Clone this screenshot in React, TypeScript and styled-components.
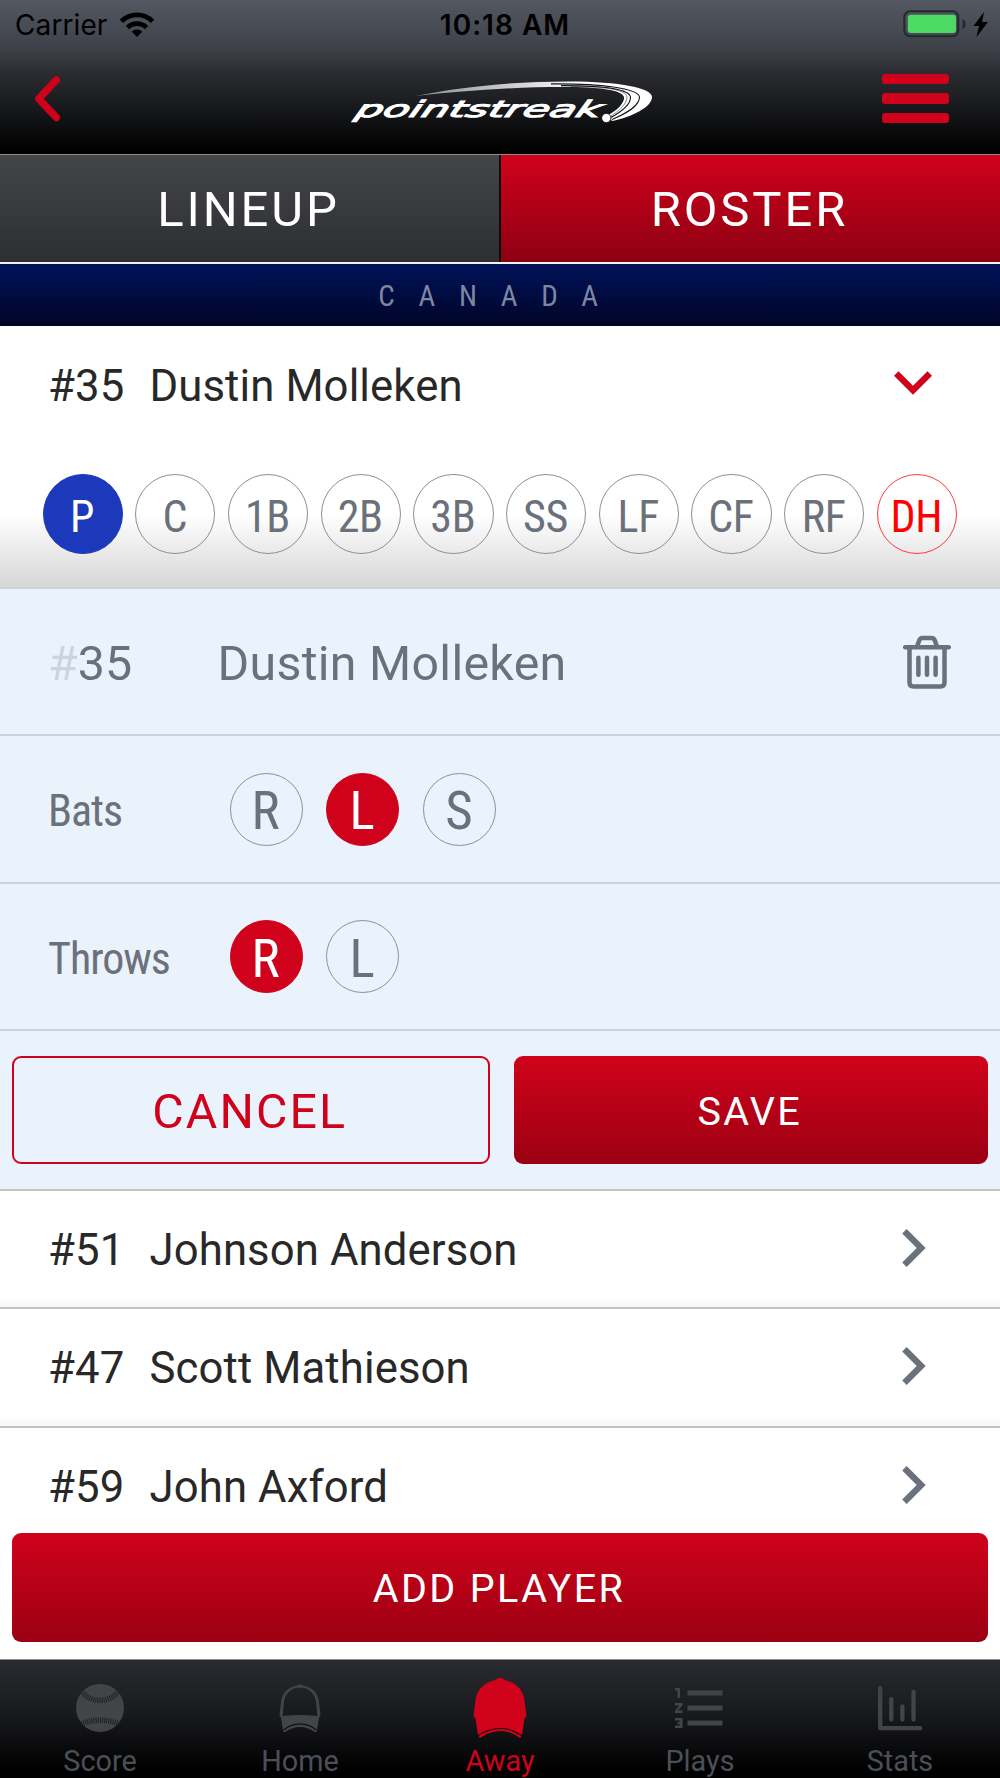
import React from "react";
import styled, { createGlobalStyle, css } from "styled-components";
import { MdChevronRight, MdExpandMore, MdFormatListNumbered } from "react-icons/md";

const RED = "#d0021b";
const SLATE = "#6b717b";
const RULE = "#ccd4de";

const GlobalStyle = createGlobalStyle`
  * { box-sizing: border-box; }
  body { margin: 0; background: #fff; }
  button { font: inherit; border: 0; background: none; padding: 0; }
`;

const Screen = styled.div`
  display: flex;
  flex-direction: column;
  width: 1000px;
  height: 1778px;
  overflow: hidden;
  background: #fff;
  font-family: Roboto, "Liberation Sans", sans-serif;
  color: #282829;
`;

const Header = styled.header`
  flex: none;
  height: 154px;
  background: linear-gradient(#535861 0, #3e4149 48px, #2a2c30 74px, #191a1d 106px, #000 150px);
`;

const StatusBar = styled.div`
  display: grid;
  grid-template-columns: 1fr auto 1fr;
  align-items: center;
  height: 50px;
  padding: 0 12px 0 15px;
  font: 400 28px/50px Inter, "Liberation Sans", sans-serif;
  color: #000;
`;

const Carrier = styled.div`
  display: flex;
  align-items: center;
  gap: 12px;
`;

const CarrierName = styled.span`
  letter-spacing: 0.1px;
`;

const Clock = styled.div`
  font-weight: 600;
  letter-spacing: 1px;
  padding: 0 0 0 7px;
`;

const Power = styled.div`
  display: flex;
  justify-content: flex-end;
`;

const NavBar = styled.nav`
  display: flex;
  align-items: center;
  justify-content: space-between;
  height: 97px;
  padding: 0 51px 0 34px;
`;

const Brand = styled.span`
  display: flex;
  margin-left: 58px;
`;

const Burger = styled.button`
  display: flex;
  flex-direction: column;
  gap: 9px;
  width: 67.5px;
`;

const BurgerBar = styled.span`
  height: 10.3px;
  border-radius: 3px;
  background: ${RED};
`;

const Tabs = styled.div`
  flex: none;
  display: flex;
  height: 108px;
  border-top: 1px solid #8e8e8e;
`;

const Tab = styled.button<{ $active?: boolean }>`
  flex: 1;
  padding: 1px 2px 0 0;
  font-size: 49px;
  letter-spacing: 2.9px;
  color: #fff;
  background: ${(p) => (p.$active ? `linear-gradient(${RED}, #8c0012)` : "linear-gradient(#444548, #2d2e31)")};
  ${(p) => !p.$active && css`border-right: 2px solid #0c0c0d;`}
`;

const TeamBar = styled.div`
  flex: none;
  height: 64px;
  border-top: 2px solid #f2f2f4;
  background: linear-gradient(#001259, #000527);
  color: #7f86a3;
  font-size: 29px;
  line-height: 64px;
  text-align: center;
`;

const Condensed = styled.span<{ $track?: number; $weight?: number }>`
  display: inline-block;
  font-family: "Roboto Condensed", Roboto, sans-serif;
  font-stretch: 75%;
  font-weight: ${(p) => p.$weight ?? 400};
  letter-spacing: ${(p) => p.$track ?? 0}px;
`;

const PlayerCard = styled.section`
  flex: none;
  height: 261px;
  background: linear-gradient(#fff 0, #fff 188px, #d6d6d6 261px);
`;

const PlayerRow = styled.div<{ $height: number }>`
  display: flex;
  align-items: center;
  flex: none;
  height: ${(p) => p.$height}px;
  padding: 2px 49px 0 48px;
  font-size: 43.7px;
  letter-spacing: 0.1px;
  white-space: nowrap;
`;

const Jersey = styled.span`
  width: 101.5px;
`;

const PlayerName = styled.span`
  flex: 1;
`;

const Chevron = styled.span<{ $color: string; $lift: number }>`
  display: flex;
  margin-top: -${(p) => p.$lift}px;
  color: ${(p) => p.$color};
`;

const Positions = styled.div`
  display: flex;
  justify-content: space-between;
  padding: 30px 43px 0 42.5px;
`;

const PositionChip = styled.button<{ $tone: "active" | "plain" | "alert" }>`
  display: flex;
  align-items: center;
  justify-content: center;
  width: 80.3px;
  height: 80.3px;
  padding: 5px 1px 0 0;
  border-radius: 50%;
  font-size: 44px;
  white-space: nowrap;
  border: 1px solid ${(p) => ({ active: "#1c39bb", plain: "#8c9099", alert: "#ff3b3b" })[p.$tone]};
  background: ${(p) => (p.$tone === "active" ? "#1c39bb" : "transparent")};
  color: ${(p) => ({ active: "#fff", plain: SLATE, alert: "#ff0000" })[p.$tone]};
`;

const EditForm = styled.section`
  flex: none;
  background: #eaf2fc;
  border-top: 2px solid ${RULE};
  color: ${SLATE};
`;

const FormRow = styled.div<{ $height: number }>`
  display: flex;
  align-items: center;
  height: ${(p) => p.$height}px;
  padding: 0 49px 0 48px;
  border-bottom: 2px solid ${RULE};
`;

const NumberField = styled.span`
  width: 169.5px;
  padding-top: 4px;
  font-size: 48.3px;
`;

const Hash = styled.span`
  color: #ccd4df;
`;

const NameField = styled.span`
  flex: 1;
  padding-top: 4px;
  font-size: 48.3px;
  letter-spacing: 0.3px;
`;

const FieldLabel = styled.span`
  width: 181.5px;
  padding-top: 4px;
  font-size: 44px;
`;

const Options = styled.div`
  display: flex;
  gap: 23.7px;
`;

const OptionChip = styled.button<{ $active?: boolean }>`
  display: flex;
  align-items: center;
  justify-content: center;
  width: 73px;
  height: 73px;
  padding: 4px 1px 0 0;
  border-radius: 50%;
  font-size: 53px;
  border: 1px solid ${(p) => (p.$active ? RED : "#8c9099")};
  background: ${(p) => (p.$active ? RED : "transparent")};
  color: ${(p) => (p.$active ? "#fff" : SLATE)};
`;

const FormActions = styled.div`
  display: grid;
  grid-template-columns: 477.5px 474.5px;
  justify-content: space-between;
  height: 158px;
  padding: 24.5px 12px 0;
`;

const Button = styled.button<{ $outline?: boolean }>`
  height: 108.5px;
  padding: 3px 2px 0 0;
  border-radius: 9px;
  font-size: ${(p) => (p.$outline ? 48.3 : 39.5)}px;
  letter-spacing: ${(p) => (p.$outline ? 2.1 : 2.4)}px;
  ${(p) =>
    p.$outline
      ? css`
          border: 2px solid ${RED};
          color: ${RED};
        `
      : css`
          background: linear-gradient(${RED}, #9b0012);
          color: #fff;
        `}
`;

const RosterList = styled.div`
  flex: none;
  height: 344px;
  overflow: hidden;
`;

const RosterItem = styled.div`
  border-top: 2px solid #c2c2c2;
  background: linear-gradient(#fff 0, #fff calc(100% - 10px), #f7f7f7 100%);
`;

const AddBar = styled.div`
  flex: none;
  display: grid;
  height: 126px;
  padding: 0 12px;
  background: #fff;
`;

const TabBar = styled.footer`
  flex: none;
  display: grid;
  grid-template-columns: repeat(5, 200px);
  height: 119px;
  border-top: 1px solid #8f8f8f;
  background: linear-gradient(#2a2b30, #191a1d 45%, #000 95%);
`;

const TabItem = styled.div<{ $active?: boolean }>`
  display: flex;
  flex-direction: column;
  align-items: center;
  color: ${(p) => (p.$active ? RED : "#434448")};
`;

const TabIcon = styled.span`
  display: flex;
  align-items: center;
  justify-content: center;
  height: 84px;
  padding-top: 12px;
`;

const TabLabel = styled.span<{ $active?: boolean }>`
  font-size: 28.8px;
  line-height: 34px;
  color: ${(p) => (p.$active ? RED : "#4b4f58")};
`;

const WifiIcon = () => (
  <svg width="36" height="26" viewBox="0 0 36 26">
    <g fill="none" stroke="#000" strokeWidth="4.8">
      <path d="M2.4 9.4A22 22 0 0 1 33.6 9.4" />
      <path d="M8.5 15.6A13.4 13.4 0 0 1 27.5 15.6" />
    </g>
    <path d="M18 25l-5.3-5.3a7.5 7.5 0 0 1 10.6 0z" />
  </svg>
);

const BatteryIcon = () => (
  <svg width="86" height="30" viewBox="0 0 86 30">
    <rect x="2.3" y="1.3" width="54" height="25" rx="6" fill="none" stroke="#26282d" strokeWidth="2" />
    <rect x="5.8" y="4.7" width="48.2" height="18.3" rx="3" fill="#4cd964" />
    <path d="M60.500 9c4 1.500 4 8.500 0 10z" fill="#26282d" />
    <path d="M82 2L71.500 16h5.500L74.500 27 86 12h-6z" fill="#000" />
  </svg>
);

const BackIcon = () => (
  <svg width="28" height="46" viewBox="0 0 28 46">
    <path d="M22.300 4L4.800 22.700 22.300 41.500" fill="none" stroke={RED} strokeWidth="7.400" strokeLinecap="round" strokeLinejoin="round" />
  </svg>
);

const Logo = () => (
  <svg width="310" height="50" viewBox="0 0 310 50">
    <defs>
      <linearGradient id="swoosh" x1="0" x2="1">
        <stop offset="0" stopColor="#8c8d90" />
        <stop offset="0.450" stopColor="#d5d5d6" />
        <stop offset="0.700" stopColor="#fff" />
      </linearGradient>
    </defs>
    <path
      d="M69.500 22C115 13 165 7.500 222 7.500C275 7.500 306 14 306 23C306 33 286 43 266 47L262 41C272 36 279 28 278 23C276 16 254 13 218 13C165 13 115 17 69.500 22Z"
      fill="url(#swoosh)"
    />
    <g fill="none" stroke="#141517">
      <path d="M215 11.600C255 11.500 283 14 284.500 23C285 31 275 38 264 44" strokeWidth="1.100" />
      <path d="M205 9.900C255 9.500 292 14 293.500 23C293.500 32 281 39 266 45.500" strokeWidth="1.100" />
      <path d="M225 12.600C262 12.500 280 16 281 23C281 30 273 37 264 42.500" strokeWidth="0.500" />
    </g>
    <text
      transform="translate(8 42.500) skewX(-20)"
      textLength="245"
      lengthAdjust="spacingAndGlyphs"
      fontFamily="DejaVu Sans, sans-serif"
      fontSize="22.800"
      fontStyle="italic"
      fill="#fff"
      stroke="#fff"
      strokeWidth="1"
    >
      pointstreak
    </text>
    <circle cx="260.300" cy="44" r="4.600" fill="#fff" stroke="#0c0d0e" strokeWidth="0.800" />
  </svg>
);

const TrashIcon = () => (
  <svg width="48" height="54" viewBox="0 0 48 54" fill="none" stroke={SLATE} strokeWidth="4.500">
    <path d="M2.200 12.200h43.600" strokeLinecap="round" />
    <path d="M14 11.500l2.200-6q.9-2.500 3.300-2.500h9q2.400 0 3.300 2.500L34 11.500" />
    <path d="M6.500 12v35.500q0 4 4 4h27q4 0 4-4V12" />
    <path d="M15.400 22.700v17M24 22.700v17M32.600 22.700v17" strokeLinecap="round" />
  </svg>
);

const BaseballIcon = () => (
  <svg width="48" height="48" viewBox="0 0 48 48">
    <circle cx="24" cy="24" r="24" fill="currentColor" />
    <g fill="none" stroke="#1f2023">
      <path d="M7 8.500C14 19 34 19 41 8.500" strokeWidth="5.500" strokeDasharray="1 1.100" />
      <path d="M5.500 40C15 35 33 35 42.500 40" strokeWidth="5.500" strokeDasharray="1 1.100" />
    </g>
  </svg>
);

const CapOutlineIcon = () => (
  <svg width="42" height="49" viewBox="0 0 42 49" fill="currentColor">
    <path
      fillRule="evenodd"
      d="M18 1.500Q21-.5 24 1.500C33 3 39 9 40 18L41.500 32 40 33.500 38 47 36.500 48.500C27 41 15 41 5.500 48.500L4 47 2 33.500.5 32 2 18C3 9 9 3 18 1.500ZM19 3.500C10.500 5 6 10.500 5 18L3.500 32Q21 30 38.500 32L37 18C36 10.500 31.500 5 23 3.500Q21 4.500 19 3.500Z"
    />
    <path d="M4 46.200C15 38 27 38 38 46.200" fill="none" stroke="#0f1012" strokeWidth="1.100" />
  </svg>
);

const CapIcon = () => (
  <svg width="54" height="62" viewBox="0 0 54 62" fill="currentColor">
    <path d="M23.500 2Q27-.5 30.500 2 32 3.500 35 4C45 7 50 14 51.500 23L53.500 39.500 51.500 41.500 49 58.500 47 61C34 51.500 20 51.500 7 61L5 58.500 2.500 41.500.5 39.500 2.500 23C4 14 9 7 19 4Q22 3.500 23.500 2Z" />
    <path d="M5.200 58.500C20 49 34 49 48.800 58.500" fill="none" stroke="#17070a" strokeWidth="1.200" />
  </svg>
);

const StatsIcon = () => (
  <svg width="46" height="46" viewBox="0 0 46 46" fill="none" stroke="currentColor" strokeWidth="4.300" strokeLinecap="round" strokeLinejoin="round">
    <path d="M3.200 3.200V43.200H43.200" />
    <path d="M14.300 14.200v20.300M25.400 21.500v13M36.500 6.800v27.700" />
  </svg>
);

const positions = ["P", "C", "1B", "2B", "3B", "SS", "LF", "CF", "RF", "DH"];
const toneOf = (p: string) => (p === "P" ? "active" : p === "DH" ? "alert" : "plain");

const roster = [
  { number: 51, name: "Johnson Anderson" },
  { number: 47, name: "Scott Mathieson" },
  { number: 59, name: "John Axford" },
];

const tabs = [
  { label: "Score", icon: <BaseballIcon /> },
  { label: "Home", icon: <CapOutlineIcon /> },
  { label: "Away", icon: <CapIcon />, active: true },
  { label: "Plays", icon: <MdFormatListNumbered size={60} /> },
  { label: "Stats", icon: <StatsIcon /> },
];

const HandRow = ({ label, options, value, height }: { label: string; options: string[]; value: string; height: number }) => (
  <FormRow $height={height}>
    <FieldLabel>
      <Condensed $track={-1} $weight={450}>
        {label}
      </Condensed>
    </FieldLabel>
    <Options>
      {options.map((o) => (
        <OptionChip key={o} $active={o === value}>
          <Condensed $weight={450}>{o}</Condensed>
        </OptionChip>
      ))}
    </Options>
  </FormRow>
);

export default function App() {
  return (
    <Screen>
      <GlobalStyle />
      <Header>
        <StatusBar>
          <Carrier>
            <CarrierName>Carrier</CarrierName>
            <WifiIcon />
          </Carrier>
          <Clock>10:18 AM</Clock>
          <Power>
            <BatteryIcon />
          </Power>
        </StatusBar>
        <NavBar>
          <BackIcon />
          <Brand>
            <Logo />
          </Brand>
          <Burger aria-label="Menu">
            <BurgerBar />
            <BurgerBar />
            <BurgerBar />
          </Burger>
        </NavBar>
      </Header>

      <Tabs>
        <Tab>LINEUP</Tab>
        <Tab $active>ROSTER</Tab>
      </Tabs>
      <TeamBar>
        <Condensed $track={23.7}>CANADA</Condensed>
      </TeamBar>

      <PlayerCard>
        <PlayerRow $height={118}>
          <Jersey>#35</Jersey>
          <PlayerName>Dustin Molleken</PlayerName>
          <Chevron $color={RED} $lift={9}>
            <MdExpandMore size={76} />
          </Chevron>
        </PlayerRow>
        <Positions>
          {positions.map((p) => (
            <PositionChip key={p} $tone={toneOf(p)}>
              <Condensed $track={-0.3} $weight={450}>
                {p}
              </Condensed>
            </PositionChip>
          ))}
        </Positions>
      </PlayerCard>

      <EditForm>
        <FormRow $height={147}>
          <NumberField>
            <Hash>#</Hash>35
          </NumberField>
          <NameField>Dustin Molleken</NameField>
          <TrashIcon />
        </FormRow>
        <HandRow label="Bats" options={["R", "L", "S"]} value="L" height={148} />
        <HandRow label="Throws" options={["R", "L"]} value="R" height={147} />
        <FormActions>
          <Button $outline>CANCEL</Button>
          <Button>SAVE</Button>
        </FormActions>
      </EditForm>

      <RosterList>
        {roster.map((p) => (
          <RosterItem key={p.number}>
            <PlayerRow $height={116.3}>
              <Jersey>#{p.number}</Jersey>
              <PlayerName>{p.name}</PlayerName>
              <Chevron $color={SLATE} $lift={4}>
                <MdChevronRight size={76} />
              </Chevron>
            </PlayerRow>
          </RosterItem>
        ))}
      </RosterList>
      <AddBar>
        <Button>ADD PLAYER</Button>
      </AddBar>

      <TabBar>
        {tabs.map((t) => (
          <TabItem key={t.label} $active={t.active}>
            <TabIcon>{t.icon}</TabIcon>
            <TabLabel $active={t.active}>{t.label}</TabLabel>
          </TabItem>
        ))}
      </TabBar>
    </Screen>
  );
}
